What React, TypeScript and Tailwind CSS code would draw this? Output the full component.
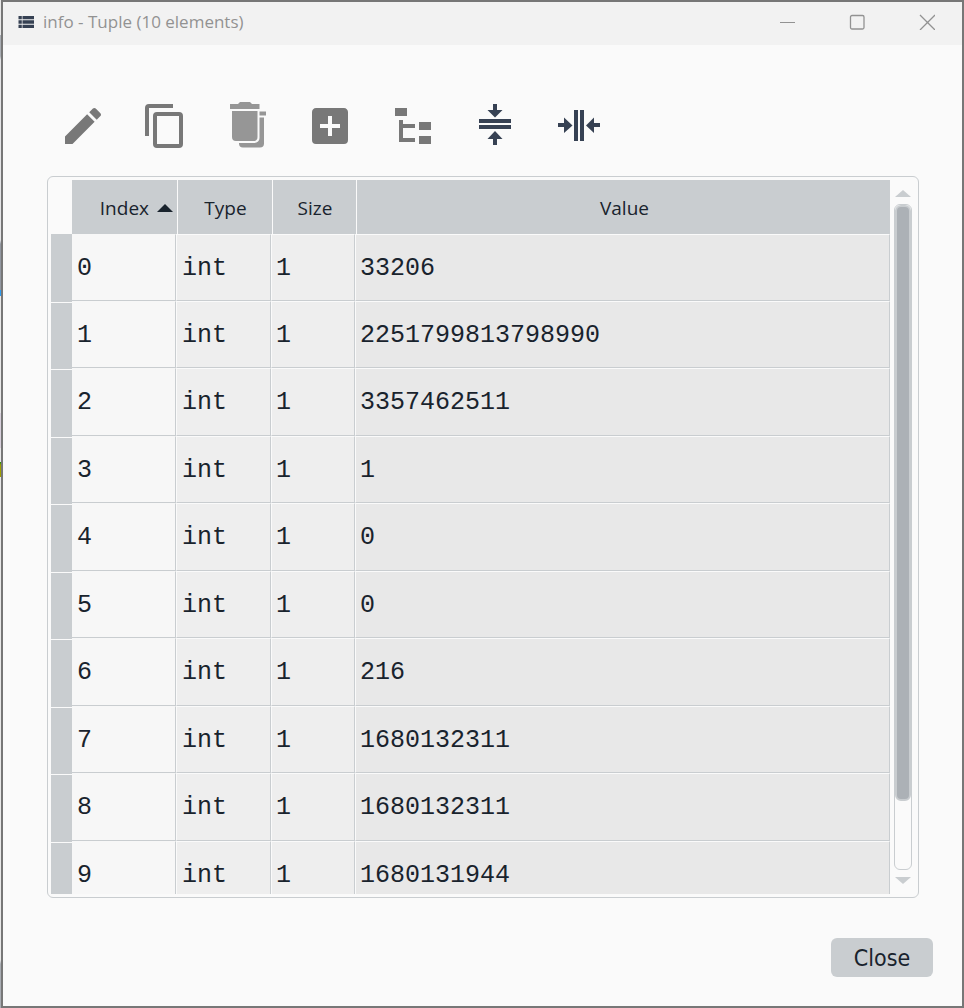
import React from "react";

type Entry = { index: number; type: string; size: number; value: string };

const entries: Entry[] = [
  { index: 0, type: "int", size: 1, value: "33206" },
  { index: 1, type: "int", size: 1, value: "2251799813798990" },
  { index: 2, type: "int", size: 1, value: "3357462511" },
  { index: 3, type: "int", size: 1, value: "1" },
  { index: 4, type: "int", size: 1, value: "0" },
  { index: 5, type: "int", size: 1, value: "0" },
  { index: 6, type: "int", size: 1, value: "216" },
  { index: 7, type: "int", size: 1, value: "1680132311" },
  { index: 8, type: "int", size: 1, value: "1680132311" },
  { index: 9, type: "int", size: 1, value: "1680131944" },
];

function ToolButton({ label, tone, viewBox = "0 0 24 24", d }: { label: string; tone: string; viewBox?: string; d: string }) {
  return (
    <button type="button" aria-label={label} className={`size-12 ${tone}`}>
      <svg viewBox={viewBox} className="size-12" fill="currentColor" aria-hidden="true">
        <path d={d} />
      </svg>
    </button>
  );
}

const windowButton = "flex h-10 w-[70px] items-center justify-center";

function TitleBar() {
  return (
    <header className="flex h-[43px] shrink-0 items-center bg-[#f2f2f2] pb-[3px] pl-[15px] text-[#929292]">
      <svg width="16" height="12" viewBox="0 0 16 12" className="text-[#364153]" fill="currentColor" aria-hidden="true">
        <path d="M.5 0h3.300v3.300H.5zM4.500 0H16v3.300H4.500zM.5 4.300h3.300v3.400H.5zM4.500 4.300H16v3.400H4.500zM.5 8.700h3.300V12H.5zM4.500 8.700H16V12H4.500z" />
      </svg>
      <h1 className="ml-[9px] flex-1 text-[17px] leading-6">info - Tuple (10 elements)</h1>
      <div className="flex">
        <button type="button" aria-label="Minimize" className={windowButton}>
          <svg width="16" height="16" viewBox="0 0 16 16" fill="none" stroke="currentColor" aria-hidden="true">
            <path d="M1 8.500h15" />
          </svg>
        </button>
        <button type="button" aria-label="Maximize" className={windowButton}>
          <svg width="16" height="16" viewBox="0 0 16 16" fill="none" stroke="currentColor" strokeWidth="1.3" aria-hidden="true">
            <rect x="1.500" y="1.500" width="13.500" height="13.500" rx="1.500" />
          </svg>
        </button>
        <button type="button" aria-label="Close window" className={windowButton}>
          <svg width="16" height="16" viewBox="0 0 16 16" fill="none" stroke="currentColor" strokeWidth="1.3" aria-hidden="true">
            <path d="M1 1l15 15M16 1L1 16" />
          </svg>
        </button>
      </div>
    </header>
  );
}

function Toolbar() {
  return (
    <div role="toolbar" aria-label="Edit" className="flex gap-[35px] pl-3">
      <div className="flex gap-[34px]">
        <ToolButton label="Edit" tone="text-[#787878]" d="M20.71,7.04C21.1,6.65 21.1,6 20.71,5.63L18.37,3.29C18,2.9 17.35,2.9 16.96,3.29L15.12,5.12L18.87,8.87M3,17.25V21H6.75L17.81,9.93L14.06,6.18L3,17.25Z" />
        <ToolButton label="Duplicate" tone="text-[#787878]" d="M19,21H8V7H19M19,5H8A2,2 0 0,0 6,7V21A2,2 0 0,0 8,23H19A2,2 0 0,0 21,21V7A2,2 0 0,0 19,5M16,1H4A2,2 0 0,0 2,3V17H4V3H16V1Z" />
      </div>
      <div className="flex gap-[34px]">
        <ToolButton label="Remove" tone="text-[#969696]" viewBox="0 0 48 48" d="M6 2h8l2-2h10l2 2h7.500v5H6zM8 9h25.500v26a4 4 0 0 1-4 4H12a4 4 0 0 1-4-4zM35.500 9.500H42v4h-6.500zM35.500 15.500H40V41.500a4 4 0 0 1-4 4H19a4 4 0 0 1-4-4V41h15.500a5 5 0 0 0 5-5z" />
        <ToolButton label="Insert" tone="text-[#787878]" d="M17,13H13V17H11V13H7V11H11V7H13V11H17M19,3H5C3.89,3 3,3.89 3,5V19A2,2 0 0,0 5,21H19A2,2 0 0,0 21,19V5C21,3.89 20.1,3 19,3Z" />
      </div>
      <div className="flex gap-[34px]">
        <ToolButton label="View with the object explorer" tone="text-[#787878]" d="M3,3H9V7H3V3M15,10H21V14H15V10M15,17H21V21H15V17M13,13H7V18H13V20H7L5,20V9H7V11H13V13Z" />
        <ToolButton label="Resize rows to contents" tone="text-[#364153]" viewBox="0 0 48 48" d="M22 2h4v6h5.500L24 15.500 16.500 8H22zM8 17h32v4H8zM8 23h32v4H8zM24 29l7.500 8H26v6h-4v-6h-5.500z" />
      </div>
      <ToolButton label="Resize columns to contents" tone="text-[#364153]" viewBox="0 0 48 48" d="M4 21h6v-5.500L18.500 23.500 10 31v-6H4zM20 8h4v31h-4zM26 8h4v31h-4zM32 23.500L40 15.500V21h6v4h-6v6z" />
    </div>
  );
}

const headCell = "sticky top-0 z-10 h-[54px] px-0 pb-0 pt-[2px] font-normal";
const divided = "pl-1 bg-[linear-gradient(90deg,#c9cdd0_1px,#fafafa_1px,#fafafa_2px,#c9cdd0_2px)]";
const bodyCell = "border-t border-r border-b border-r-[#c9cdd0] border-b-[#c9cdd0] pr-0 pb-0 pt-[2px] text-left font-normal";

function TupleTable() {
  return (
    <table className="w-full table-fixed border-separate border-spacing-0 text-[#19232d]">
      <colgroup>
        <col className="w-[21px]" />
        <col className="w-[104px]" />
        <col className="w-[95px]" />
        <col className="w-[84px]" />
        <col />
      </colgroup>
      <thead className="text-[19px] leading-6">
        <tr>
          <td className="sticky top-0 z-10 bg-[#fafafa] p-0" />
          <th scope="col" aria-sort="ascending" className={`${headCell} bg-[#c9cdd0]`}>
            <span className="flex items-center justify-end gap-2 pr-[3px]">
              Index
              <svg width="16" height="8" viewBox="0 0 16 8" fill="currentColor" aria-hidden="true">
                <path d="M8 0l8 8H0z" />
              </svg>
            </span>
          </th>
          <th scope="col" className={`${headCell} ${divided}`}>Type</th>
          <th scope="col" className={`${headCell} ${divided}`}>Size</th>
          <th scope="col" className={`${headCell} ${divided}`}>Value</th>
        </tr>
      </thead>
      <tbody className="font-['Liberation_Mono',monospace] text-[25px] leading-8">
        {entries.map((e, i) => (
          <tr key={e.index} className={`group ${i > 0 && i % 2 === 0 ? "h-[68px]" : "h-[67px]"}`}>
            <td className="bg-[linear-gradient(#c9cdd0_1px,#fafafa_1px,#fafafa_2px,#c9cdd0_2px)] p-0 group-first:bg-[linear-gradient(#c9cdd0,#c9cdd0)]" />
            <th scope="row" className={`${bodyCell} border-t-[#f7f7f7] bg-[#f7f7f7] pl-[5px]`}>{e.index}</th>
            <td className={`${bodyCell} border-l border-t-[#fafafa] border-l-[#fafafa] bg-[#eeeeee] pl-[5px]`}>{e.type}</td>
            <td className={`${bodyCell} border-l border-t-[#fafafa] border-l-[#fafafa] bg-[#eeeeee] pl-[4px]`}>{e.size}</td>
            <td className={`${bodyCell} border-l border-t-[#fafafa] border-l-[#fafafa] bg-[#e8e8e8] pl-[4px]`}>{e.value}</td>
          </tr>
        ))}
      </tbody>
    </table>
  );
}

function ScrollRail() {
  return (
    <div className="flex w-[18px] shrink-0 flex-col items-center py-[10px] text-[#c9cdd0]" aria-hidden="true">
      <svg width="16" height="7" viewBox="0 0 16 7" fill="currentColor">
        <path d="M8 0l8 7H0z" />
      </svg>
      <div className="my-[7px] w-full flex-1 rounded-md border border-[#c9cdd0] bg-[#fafafa]">
        <div className="h-[calc(90%-2px)] rounded-md border-2 border-[#c9cdd0] bg-[#acb1b6]" />
      </div>
      <svg width="16" height="7" viewBox="0 0 16 7" fill="currentColor">
        <path d="M0 0h16l-8 7z" />
      </svg>
    </div>
  );
}

export default function App() {
  return (
    <div className="flex h-screen flex-col bg-[linear-gradient(#e8e8e8_35px,#a9adb3_35px,#a9adb3_56px,#e4e4e6_60px,#e4e4e6_240px,#9297a0_244px,#9297a0_290px,#2d9cf0_290px,#2d9cf0_296px,#e8e8e8_296px,#e8e8e8_413px,#d8d0dc_413px,#d8d0dc_448px,#e8e8e8_448px,#e8e8e8_462px,#118811_462px,#a0a000_465px,#a0a000_477px,#e8e8e8_477px,#e8e8e8_960px,#a9adb3_964px)] pl-px font-['Open_Sans','Noto_Sans',sans-serif]">
      <div className="flex min-h-0 flex-1 flex-col border-2 border-[#777777] bg-[#fafafa]">
        <TitleBar />
        <main className="flex min-h-0 flex-1 flex-col pt-[57px] pb-[29px] pl-11">
          <Toolbar />
          <div className="mt-[26px] mr-[43px] flex min-h-0 flex-1 gap-1 rounded-md border border-[#c9cdd0] p-[3px] pr-[6px]">
            <div className="min-w-0 flex-1 overflow-y-auto [scrollbar-width:none]">
              <TupleTable />
            </div>
            <ScrollRail />
          </div>
          <footer className="mt-10 mr-[29px] flex justify-end">
            <button type="button" className="h-[39px] w-[102px] rounded-md bg-[#c9cdd0] pt-[2px] font-['DejaVu_Sans_Condensed','DejaVu_Sans',sans-serif] text-[23px] text-[#19232d]">
              Close
            </button>
          </footer>
        </main>
      </div>
    </div>
  );
}
